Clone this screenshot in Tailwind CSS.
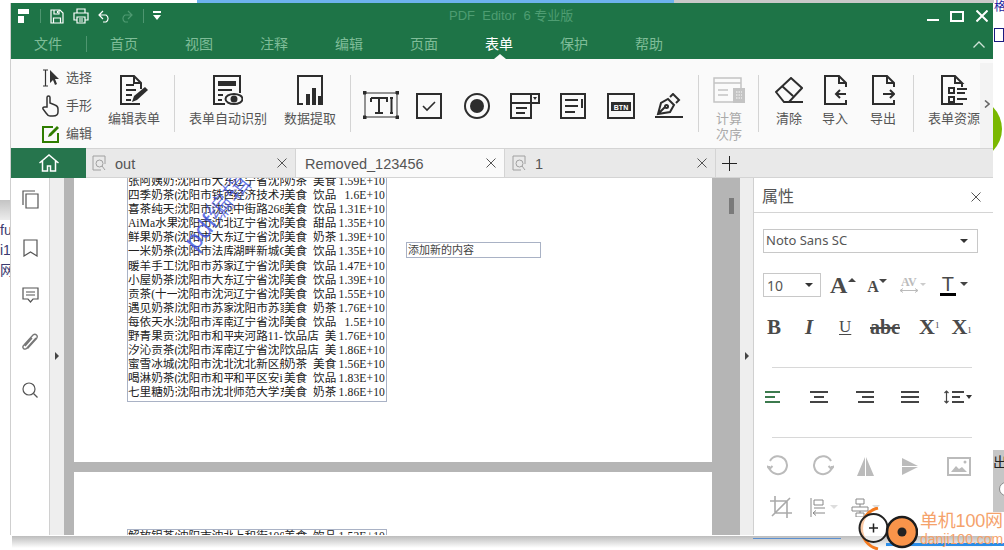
<!DOCTYPE html>
<html lang="zh">
<head>
<meta charset="utf-8">
<script src="https://cdn.jsdelivr.net/npm/@tailwindcss/browser@4"></script>
</head>
<body class="bg-white">
<div class="relative w-[1004px] h-[550px] overflow-hidden bg-white font-['Liberation_Sans','Noto_Sans_CJK_SC',sans-serif]">

  <!-- desktop behind the window -->
  <div class="absolute left-[197px] top-0 w-[477px] h-[3px] bg-[#6db3ee]"></div>
  <div class="absolute left-[674px] top-0 w-[320px] h-[3px] bg-[#c9c9c9]"></div>
  <div class="absolute left-[994px] top-0 text-[12px] leading-[14px] text-[#1a1aa0]">格</div>
  <div class="absolute left-[994px] top-[28px] w-[10px] h-[14px] border border-[#1a1a80] bg-white"></div>
  <div class="absolute left-[926px] top-[98px] w-[76px] h-[62px] rounded-full bg-[#7ab800]"></div>
  <div class="absolute left-0 top-[200px] w-[10px] h-[20px] bg-gradient-to-b from-[#c4c4c4] to-[#ececec]"></div>
  <div class="absolute left-0 top-[220px] w-[10px] overflow-hidden text-[14px] leading-[20px] text-[#3a3a70] whitespace-nowrap">
    <div>ful</div><div>i1</div><div>网</div>
  </div>
  <div class="absolute left-[993px] top-[450px] w-[11px] h-[62px] bg-[#c6c6c6] overflow-hidden text-[14px] leading-[24px] text-[#222] whitespace-nowrap">
    <div>出硅</div>
    <div class="ml-[6px] mt-[8px] w-[14px] h-[14px] rounded-full bg-white border border-[#888]"></div>
  </div>
  <div class="absolute left-[12px] top-[536px] w-[980px] h-[12px] bg-gradient-to-b from-[#bdbdbd] to-white"></div>
  <div class="absolute left-[753px] top-[538px] w-[88px] h-px bg-[#5b8fd0]"></div>
  <div class="absolute left-[886px] top-[543px] w-[118px] h-[3px] bg-[#2b8de8]"></div>

  <!-- application window -->
  <div class="absolute left-[10px] top-[3px] w-[983px] h-[532px] flex flex-col border-l border-[#cfcfcf] bg-white">

    <!-- title bar -->
    <div class="h-[30px] pb-[4px] flex items-center bg-[#1e7447] shrink-0">
      <svg class="ml-[7px] w-[12px] h-[14px]" viewBox="0 0 12 14" fill="#fff"><path d="M0 0h11v5H0zM0 7h6v7H0z"/></svg>
      <div class="ml-[10px] w-px h-[14px] bg-[#4e9670]"></div>
      <svg class="ml-[9px] w-[14px] h-[15px]" viewBox="0 0 14 15" fill="none" stroke="#fff" stroke-width="1.2"><path d="M1 1h9l3 3v10H1zM4 1v4h5V1M3.500 14V9h7v5M7.500 2v2"/></svg>
      <svg class="ml-[9px] w-[16px] h-[16px]" viewBox="0 0 16 16" fill="none" stroke="#fff" stroke-width="1.2"><path d="M4 5V1h8v4M4 12H1V5h14v7h-3M4 9h8v6H4zM6 11h4M6 13h4"/></svg>
      <svg class="ml-[9px] w-[13px] h-[13px]" viewBox="0 0 13 13" fill="none" stroke="#fff" stroke-width="1.2"><path d="M5 1 1 5l4 4M1 5h7a4 4 0 0 1 0 7H5"/></svg>
      <svg class="ml-[9px] w-[13px] h-[13px]" viewBox="0 0 13 13" fill="none" stroke="#4f9a72" stroke-width="1.2"><path d="m8 1 4 4-4 4M12 5H5a4 4 0 0 0 0 7h3"/></svg>
      <div class="ml-[10px] w-px h-[14px] bg-[#4e9670]"></div>
      <svg class="ml-[9px] w-[8px] h-[10px]" viewBox="0 0 8 10" fill="#fff"><path d="M0 0h8v2H0zM0 4h8L4 9z"/></svg>
      <div class="ml-[288px] text-[13px] leading-[20px] text-[#4e9d72] whitespace-pre">PDF  Editor  6 专业版</div>
      <div class="ml-auto flex items-center">
        <div class="w-[12px] h-[2px] bg-white mt-[8px]"></div>
        <div class="ml-[11px] w-[14px] h-[11px] border-2 border-white"></div>
        <svg class="ml-[12px] mr-[5px] w-[12px] h-[12px]" viewBox="0 0 12 12" stroke="#fff" stroke-width="2"><path d="m0.500 0.500 11 11M11.500 0.500l-11 11"/></svg>
      </div>
    </div>

    <!-- menu bar -->
    <div class="relative h-[26px] pb-[4px] flex items-center bg-[#1e7447] shrink-0 text-[14px] leading-[20px] text-[#7fbd98]">
      <span class="ml-[23px] w-[28px]">文件</span>
      <span class="ml-[24px] w-px h-[16px] bg-[#4e9670]"></span>
      <span class="ml-[23px] w-[28px]">首页</span>
      <span class="ml-[47px] w-[28px]">视图</span>
      <span class="ml-[47px] w-[28px]">注释</span>
      <span class="ml-[47px] w-[28px]">编辑</span>
      <span class="ml-[47px] w-[28px]">页面</span>
      <span class="ml-[47px] w-[28px] text-white">表单</span>
      <span class="ml-[47px] w-[28px]">保护</span>
      <span class="ml-[47px] w-[28px]">帮助</span>
      <svg class="ml-auto mr-[8px] w-[12px] h-[7px]" viewBox="0 0 12 7" fill="none" stroke="#cfe3d7" stroke-width="1.300"><path d="m0.500 6.500 5.500-5.500 5.500 5.500"/></svg>
      <div class="absolute left-[483px] bottom-0 w-0 h-0 border-x-[6px] border-x-transparent border-b-[5px] border-b-[#fafafa]"></div>
    </div>

    <!-- ribbon -->
    <div class="relative h-[89px] flex items-start bg-[#fafafa] shrink-0 text-[13px] leading-[16px] text-[#555] whitespace-nowrap">
      <!-- tools -->
      <div class="ml-[31px] w-[66px] pt-[5px] flex flex-col">
        <div class="h-[28px] flex items-center">
          <svg class="w-[18px] h-[18px]" viewBox="0 0 18 18" fill="none"><path d="M1 1h5M1 17h5M3.500 1v16" stroke="#333" stroke-width="1.200"/><path d="M8 1v13l3-3 2 5 2-1-2-5h4z" fill="#333"/></svg>
          <span class="ml-[6px]">选择</span>
        </div>
        <div class="h-[28px] flex items-center">
          <svg class="w-[18px] h-[22px]" viewBox="0 0 18 22" fill="none" stroke="#333" stroke-width="1.500"><path d="M5 12V2.500a1.500 1.500 0 0 1 3 0V8l5 2q3 1 3 4v3q0 4-5 4H8q-2 0-4-3l-3-4q-.5-2 1.500-2z"/></svg>
          <span class="ml-[6px]">手形</span>
        </div>
        <div class="h-[28px] flex items-center">
          <svg class="w-[18px] h-[18px]" viewBox="0 0 18 18" fill="none"><path d="M11 2H1v15h15V8" stroke="#2f7d00" stroke-width="2"/><path d="m6 12 1-3 8-8 2 2-8 8z" fill="#2f7d00"/></svg>
          <span class="ml-[6px]">编辑</span>
        </div>
      </div>
      <!-- edit form -->
      <div class="w-[52px] pt-[16px] flex flex-col items-center">
        <svg class="w-[28px] h-[30px]" viewBox="0 0 28 30" fill="none" stroke="#2d2d2d" stroke-width="2"><path d="M20 29H1V1h13l7 7v6M14 1v7h7M6 10h8M6 15h10M6 20h6M6 25h5"/><path d="m12 27 2-6 11-9 3 3-11 10z" fill="#2d2d2d" stroke="none"/></svg>
        <span class="mt-[6px]">编辑表单</span>
      </div>
      <div class="ml-[14px] mt-[16px] w-px h-[57px] bg-[#d4d4d4]"></div>
      <!-- recognition -->
      <div class="ml-[14px] w-[78px] pt-[16px] flex flex-col items-center">
        <svg class="w-[30px] h-[30px]" viewBox="0 0 30 30" fill="none" stroke="#2d2d2d" stroke-width="2"><path d="M12 29H1V1h26v17"/><path d="M5 6h18v5H5z" fill="#2d2d2d" stroke="none"/><path d="M5 15h14M5 20h5M5 25h4"/><ellipse cx="21" cy="24" rx="8.500" ry="5"/><circle cx="21" cy="24" r="2.500" fill="#2d2d2d"/></svg>
        <span class="mt-[6px]">表单自动识别</span>
      </div>
      <!-- extract -->
      <div class="ml-[17px] w-[52px] pt-[16px] flex flex-col items-center">
        <svg class="w-[26px] h-[30px]" viewBox="0 0 26 30" fill="none"><path d="M6 29H1V1h24v28h-1" stroke="#2d2d2d" stroke-width="2"/><path d="M9 19h4v11H9zM15 13h4v17h-4zM21 21h4v9h-4z" fill="#2d2d2d"/></svg>
        <span class="mt-[6px]">数据提取</span>
      </div>
      <div class="ml-[14px] mt-[16px] w-px h-[57px] bg-[#d4d4d4]"></div>
      <!-- form fields -->
      <svg class="ml-[12px] mt-[32px] w-[36px] h-[28px]" viewBox="0 0 36 28" fill="none" stroke="#2d2d2d" stroke-width="1"><path d="M2 2h32M2 26h32M2 2v24M34 2v24"/><path d="M0 0h3v3H0zM33 0h3v3h-3zM0 25h3v3H0zM33 25h3v3h-3z" fill="#2d2d2d"/><path d="M8 7h16v4M8 11V7M16 7v15M12 22h8M27 7h3M28.500 7v15M27 22h3" stroke-width="2"/></svg>
      <svg class="ml-[17px] mt-[34px] w-[26px] h-[26px]" viewBox="0 0 26 26" fill="none" stroke="#2d2d2d" stroke-width="2"><path d="M1 1h24v24H1z"/><path d="m7 13 4 4 8-8" stroke-width="1.600"/></svg>
      <svg class="ml-[22px] mt-[34px] w-[26px] h-[26px]" viewBox="0 0 26 26" fill="none"><circle cx="13" cy="13" r="12" stroke="#2d2d2d" stroke-width="2"/><circle cx="13" cy="13" r="7" fill="#2d2d2d"/></svg>
      <svg class="ml-[20px] mt-[34px] w-[30px] h-[26px]" viewBox="0 0 30 26" fill="none" stroke="#2d2d2d" stroke-width="2"><path d="M21 1H1v24h20V10M21 10H1M21 1h8v9h-8z"/><path d="M6 15h11M6 20h9"/><path d="M23 4h4l-2 3z" fill="#2d2d2d" stroke="none"/></svg>
      <svg class="ml-[20px] mt-[34px] w-[26px] h-[26px]" viewBox="0 0 26 26" fill="none" stroke="#2d2d2d" stroke-width="2"><path d="M1 1h24v24H1zM5 7h13M5 13h13M5 19h10M22 6v9"/></svg>
      <svg class="ml-[21px] mt-[34px] w-[28px] h-[26px]" viewBox="0 0 28 26" fill="none"><path d="M1 1h26v24H1z" stroke="#2d2d2d" stroke-width="2"/><path d="M4 9h20v9H4z" fill="#2d2d2d"/><text x="14" y="16.500" font-size="7" font-weight="700" fill="#fff" text-anchor="middle" font-family="Liberation Sans">BTN</text></svg>
      <svg class="ml-[20px] mt-[34px] w-[28px] h-[25px]" viewBox="0 0 28 25" fill="none" stroke="#2d2d2d" stroke-width="2"><path d="M0 24h28" /><path d="m3 21 3-11 7-4 6 6-4 7zM3 21l7-7M15 4l3-3 6 6-3 3"/><circle cx="11.500" cy="13.500" r="1.500"/></svg>
      <div class="ml-[15px] mt-[16px] w-px h-[57px] bg-[#d4d4d4]"></div>
      <!-- calc order -->
      <div class="ml-[14px] w-[32px] pt-[18px] flex flex-col items-center text-[#aaa]">
        <svg class="w-[32px] h-[26px]" viewBox="0 0 32 26" fill="none" stroke="#c4c4c4" stroke-width="1.500"><path d="M1 1h27v5H1zM1 6v19h20M28 6v5M5 13h10M5 18h10"/><path d="M20 11h12v15H20z" fill="#c4c4c4" stroke="none"/><path d="M23 15h6M23 18h6M23 21h6" stroke="#fafafa" stroke-width="1" stroke-dasharray="1.500 1"/></svg>
        <span class="mt-[8px]">计算</span>
        <span>次序</span>
      </div>
      <div class="ml-[13px] mt-[16px] w-px h-[57px] bg-[#d4d4d4]"></div>
      <!-- clear / import / export -->
      <div class="ml-[16px] w-[28px] pt-[18px] flex flex-col items-center">
        <svg class="w-[28px] h-[26px]" viewBox="0 0 28 26" fill="none" stroke="#2d2d2d" stroke-width="2"><path d="m1 15 15-14 11 10-13 14H9zM7 9l11 10M10 25h18"/></svg>
        <span class="mt-[8px]">清除</span>
      </div>
      <div class="ml-[19px] w-[26px] pt-[16px] flex flex-col items-center">
        <svg class="w-[23px] h-[30px]" viewBox="0 0 23 30" fill="none" stroke="#2d2d2d" stroke-width="2"><path d="M22 12V8l-7-7H1v28h21v-4M15 1v7h7"/><path d="M22 19H12M16 15l-4 4 4 4"/></svg>
        <span class="mt-[6px]">导入</span>
      </div>
      <div class="ml-[22px] w-[26px] pt-[16px] flex flex-col items-center">
        <svg class="w-[23px] h-[30px]" viewBox="0 0 23 30" fill="none" stroke="#2d2d2d" stroke-width="2"><path d="M22 12V8l-7-7H1v28h21v-4M15 1v7h7"/><path d="M11 19h11M18 15l4 4-4 4"/></svg>
        <span class="mt-[6px]">导出</span>
      </div>
      <div class="ml-[17px] mt-[16px] w-px h-[57px] bg-[#d4d4d4]"></div>
      <div class="ml-[14px] w-[52px] pt-[16px] flex flex-col items-center">
        <svg class="w-[27px] h-[30px]" viewBox="0 0 27 30" fill="none" stroke="#2d2d2d" stroke-width="2"><path d="M21 8v4M22 29H1V1h13l7 7h-7V1"/><path d="M8 13h5v5H8zM8 22h5v5H8zM16 14h10M16 18h8M16 24h10"/></svg>
        <span class="mt-[6px]">表单资源</span>
      </div>
      <div class="absolute right-0 top-[4px] bottom-0 w-[13px] bg-[#f3f3f3] flex items-center justify-center">
        <svg class="w-[6px] h-[8px] mt-[-4px]" viewBox="0 0 6 8" fill="none" stroke="#666" stroke-width="1.600"><path d="m1 0.500 4 3.500-4 3.500"/></svg>
      </div>
    </div>

    <!-- tab bar -->
    <div class="h-[30px] flex items-stretch bg-[#e9e9e9] border-y border-[#d4d4d4] shrink-0 text-[14.5px] leading-[20px] text-[#555]">
      <div class="w-[75px] -my-px bg-[#26754d] flex items-center justify-center">
        <svg class="w-[20px] h-[18px]" viewBox="0 0 20 18" fill="none" stroke="#fff" stroke-width="1.500"><path d="M0.500 9 10 1l9.500 8M3.500 7v10h5v-5h3v5h5V7"/></svg>
      </div>
      <div class="w-[210px] flex items-center border-r border-[#d4d4d4]">
        <svg class="ml-[6px] w-[14px] h-[16px]" viewBox="0 0 14 16" fill="none" stroke="#a0a0a0" stroke-width="1"><path d="M9 15H1V1h12v8"/><circle cx="7.500" cy="8.500" r="3.500"/><path d="m10 11 3 4"/></svg>
        <span class="ml-[9px] mt-[1px]">out</span>
        <svg class="ml-auto mr-[8px] w-[10px] h-[10px]" viewBox="0 0 10 10" stroke="#555"><path d="m0.500 0.500 9 9M9.500 0.500l-9 9"/></svg>
      </div>
      <div class="w-[209px] flex items-center bg-[#fafafa] border-r border-[#d4d4d4]">
        <span class="ml-[9px] mt-[1px]">Removed_123456</span>
        <svg class="ml-auto mr-[8px] w-[10px] h-[10px]" viewBox="0 0 10 10" stroke="#555"><path d="m0.500 0.500 9 9M9.500 0.500l-9 9"/></svg>
      </div>
      <div class="w-[211px] flex items-center border-r border-[#d4d4d4]">
        <svg class="ml-[7px] w-[14px] h-[16px]" viewBox="0 0 14 16" fill="none" stroke="#a0a0a0" stroke-width="1"><path d="M9 15H1V1h12v8"/><circle cx="7.500" cy="8.500" r="3.500"/><path d="m10 11 3 4"/></svg>
        <span class="ml-[9px] mt-[1px]">1</span>
        <svg class="ml-auto mr-[8px] w-[10px] h-[10px]" viewBox="0 0 10 10" stroke="#555"><path d="m0.500 0.500 9 9M9.500 0.500l-9 9"/></svg>
      </div>
      <div class="flex items-center">
        <svg class="ml-[6px] w-[15px] h-[15px]" viewBox="0 0 15 15" stroke="#222"><path d="M7.500 0v15M0 7.500h15"/></svg>
      </div>
    </div>

    <!-- body -->
    <div class="flex-1 min-h-0 flex overflow-hidden">
      <!-- left rail -->
      <div class="w-[39px] shrink-0 flex flex-col items-center pt-[12px] gap-[30px] border-r border-[#d0d0d0] bg-white">
        <svg class="w-[17px] h-[19px]" viewBox="0 0 17 19" fill="none" stroke="#555" stroke-width="1.200"><path d="M1 15V1h12M4 4h12v14H4z"/></svg>
        <svg class="w-[15px] h-[18px]" viewBox="0 0 15 18" fill="none" stroke="#555" stroke-width="1.200"><path d="M1 1h13v16l-6.500-4L1 17z"/></svg>
        <svg class="w-[17px] h-[16px]" viewBox="0 0 17 16" fill="none" stroke="#555" stroke-width="1.200"><path d="M1 1h15v11h-5l-2.500 3L6 12H1zM4 5h9M4 8h9"/></svg>
        <svg class="w-[18px] h-[19px]" viewBox="0 0 18 19" fill="none" stroke="#777" stroke-width="1.400"><path d="m15 5-9 10q-2 2-3.500.5T3 12l9-10q2-1.500 3.500 0t0 3.500l-9 10M11 5l-7 8"/></svg>
        <svg class="w-[16px] h-[16px]" viewBox="0 0 16 16" fill="none" stroke="#555" stroke-width="1.200"><circle cx="7" cy="7" r="6"/><path d="m11.500 11.500 4 4"/></svg>
      </div>
      <!-- left gutter -->
      <div class="w-[14px] shrink-0 bg-[#eeeeee] flex items-center justify-center">
        <div class="mt-[-2px] w-0 h-0 border-y-[4px] border-y-transparent border-l-[4px] border-l-[#444]"></div>
      </div>
      <!-- document viewport -->
      <div class="relative w-[676px] shrink-0 bg-[#b5b5b5] pl-[10px] overflow-hidden">
        <!-- page 1 -->
        <div class="relative w-[638px] h-[284px] bg-white overflow-hidden font-['Liberation_Serif','Noto_Sans_CJK_SC',serif] text-[11.6px] leading-[14.1px] text-[#222] [word-spacing:3px]">
          <div class="absolute left-[53px] top-[-4px] w-[260px] border border-[#a9b2c5] bg-white whitespace-nowrap">
            <div class="flex h-[14.1px]"><span class="w-[49px] overflow-hidden">张阿姨奶茶</span><span class="w-[56px] overflow-hidden">沈阳市大东</span><span class="w-[51px] overflow-hidden">辽宁省沈阳</span><span class="w-[52px]">奶茶 美食</span><span class="flex-1 text-right pr-px tracking-[0.12px]">1.59E+10</span></div>
            <div class="flex h-[14.1px]"><span class="w-[49px] overflow-hidden">四季奶茶(沈阳</span><span class="w-[56px] overflow-hidden">沈阳市铁西</span><span class="w-[51px] overflow-hidden">经济技术开</span><span class="w-[52px]">美食 饮品</span><span class="flex-1 text-right pr-px tracking-[0.12px]">1.6E+10</span></div>
            <div class="flex h-[14.1px]"><span class="w-[49px] overflow-hidden">喜茶纯天然</span><span class="w-[56px] overflow-hidden">沈阳市沈河</span><span class="w-[51px] overflow-hidden">中街路268</span><span class="w-[52px]">美食 饮品</span><span class="flex-1 text-right pr-px tracking-[0.12px]">1.31E+10</span></div>
            <div class="flex h-[14.1px]"><span class="w-[49px] overflow-hidden">AiMa水果捞</span><span class="w-[56px] overflow-hidden">沈阳市沈北</span><span class="w-[51px] overflow-hidden">辽宁省沈阳</span><span class="w-[52px]">美食 甜品</span><span class="flex-1 text-right pr-px tracking-[0.12px]">1.35E+10</span></div>
            <div class="flex h-[14.1px]"><span class="w-[49px] overflow-hidden">鲜果奶茶(</span><span class="w-[56px] overflow-hidden">沈阳市大东</span><span class="w-[51px] overflow-hidden">辽宁省沈阳</span><span class="w-[52px]">美食 奶茶</span><span class="flex-1 text-right pr-px tracking-[0.12px]">1.39E+10</span></div>
            <div class="flex h-[14.1px]"><span class="w-[49px] overflow-hidden">一米奶茶(</span><span class="w-[56px] overflow-hidden">沈阳市法库</span><span class="w-[51px] overflow-hidden">湖畔新城C</span><span class="w-[52px]">美食 饮品</span><span class="flex-1 text-right pr-px tracking-[0.12px]">1.35E+10</span></div>
            <div class="flex h-[14.1px]"><span class="w-[49px] overflow-hidden">暖羊手工奶</span><span class="w-[56px] overflow-hidden">沈阳市苏家</span><span class="w-[51px] overflow-hidden">辽宁省沈阳</span><span class="w-[52px]">美食 饮品</span><span class="flex-1 text-right pr-px tracking-[0.12px]">1.47E+10</span></div>
            <div class="flex h-[14.1px]"><span class="w-[49px] overflow-hidden">小屋奶茶店</span><span class="w-[56px] overflow-hidden">沈阳市大东</span><span class="w-[51px] overflow-hidden">辽宁省沈阳</span><span class="w-[52px]">美食 饮品</span><span class="flex-1 text-right pr-px tracking-[0.12px]">1.39E+10</span></div>
            <div class="flex h-[14.1px]"><span class="w-[49px] overflow-hidden">贡茶(十一</span><span class="w-[56px] overflow-hidden">沈阳市沈河</span><span class="w-[51px] overflow-hidden">辽宁省沈阳</span><span class="w-[52px]">美食 饮品</span><span class="flex-1 text-right pr-px tracking-[0.12px]">1.55E+10</span></div>
            <div class="flex h-[14.1px]"><span class="w-[49px] overflow-hidden">遇见奶茶店</span><span class="w-[56px] overflow-hidden">沈阳市苏家</span><span class="w-[51px] overflow-hidden">沈阳市苏家</span><span class="w-[52px]">美食 奶茶</span><span class="flex-1 text-right pr-px tracking-[0.12px]">1.76E+10</span></div>
            <div class="flex h-[14.1px]"><span class="w-[49px] overflow-hidden">每依天水果</span><span class="w-[56px] overflow-hidden">沈阳市浑南</span><span class="w-[51px] overflow-hidden">辽宁省沈阳</span><span class="w-[52px]">美食 饮品</span><span class="flex-1 text-right pr-px tracking-[0.12px]">1.5E+10</span></div>
            <div class="flex h-[14.1px]"><span class="w-[49px] overflow-hidden">野青果贡茶</span><span class="w-[56px] overflow-hidden">沈阳市和平</span><span class="w-[51px] overflow-hidden">夹河路11-</span><span class="w-[52px]">饮品店 美</span><span class="flex-1 text-right pr-px tracking-[0.12px]">1.76E+10</span></div>
            <div class="flex h-[14.1px]"><span class="w-[49px] overflow-hidden">汐沁贡茶(</span><span class="w-[56px] overflow-hidden">沈阳市浑南</span><span class="w-[51px] overflow-hidden">辽宁省沈阳</span><span class="w-[52px]">饮品店 美</span><span class="flex-1 text-right pr-px tracking-[0.12px]">1.86E+10</span></div>
            <div class="flex h-[14.1px]"><span class="w-[49px] overflow-hidden">蜜雪冰城(</span><span class="w-[56px] overflow-hidden">沈阳市沈北</span><span class="w-[51px] overflow-hidden">沈北新区航</span><span class="w-[52px]">奶茶 美食</span><span class="flex-1 text-right pr-px tracking-[0.12px]">1.56E+10</span></div>
            <div class="flex h-[14.1px]"><span class="w-[49px] overflow-hidden">喝淋奶茶(</span><span class="w-[56px] overflow-hidden">沈阳市和平</span><span class="w-[51px] overflow-hidden">和平区安i</span><span class="w-[52px]">美食 饮品</span><span class="flex-1 text-right pr-px tracking-[0.12px]">1.83E+10</span></div>
            <div class="flex h-[14.1px]"><span class="w-[49px] overflow-hidden">七里糖奶茶</span><span class="w-[56px] overflow-hidden">沈阳市沈北</span><span class="w-[51px] overflow-hidden">师范大学东</span><span class="w-[52px]">美食 奶茶</span><span class="flex-1 text-right pr-px tracking-[0.12px]">1.86E+10</span></div>
          </div>
          <!-- watermark -->
          <div class="absolute left-[99px] top-[20px] -rotate-[50deg] font-['Liberation_Sans','Noto_Sans_CJK_SC',sans-serif] text-[26px] leading-[28px] font-light text-[#3b50e0]/80 whitespace-nowrap">pdf编辑</div>
          <!-- added text box -->
          <div class="absolute left-[332px] top-[64px] w-[135px] h-[16px] border border-[#a9b2c5] text-[11px] leading-[14px] text-[#444] pl-px font-['Liberation_Sans','Noto_Sans_CJK_SC',sans-serif]">添加新的内容</div>
        </div>
        <!-- page 2 -->
        <div class="relative w-[638px] h-[80px] mt-[10px] bg-white overflow-hidden font-['Liberation_Serif','Noto_Sans_CJK_SC',serif] text-[11.6px] leading-[14.1px] text-[#222] [word-spacing:3px]">
          <div class="absolute left-[53px] top-[57px] w-[260px] border border-[#a9b2c5] whitespace-nowrap">
            <div class="flex h-[14.1px]"><span class="w-[49px] overflow-hidden">解放银茶(</span><span class="w-[56px] overflow-hidden">沈阳市沈北</span><span class="w-[51px] overflow-hidden">上和街100</span><span class="w-[52px]">美食 饮品</span><span class="flex-1 text-right pr-px tracking-[0.12px]">1.52E+10</span></div>
          </div>
        </div>
        <!-- scrollbar -->
        <div class="absolute right-[6px] top-[20px] w-[5px] h-[16px] bg-[#7a7a7a]"></div>
      </div>
      <!-- right gutter -->
      <div class="w-[14px] shrink-0 bg-[#eeeeee] border-r border-[#d0d0d0] flex items-center justify-center">
        <div class="mt-[-2px] w-0 h-0 border-y-[4px] border-y-transparent border-l-[4px] border-l-[#444]"></div>
      </div>

      <!-- properties panel -->
      <div class="flex-1 min-w-0 bg-white text-[#4a4a4a]">
        <div class="h-[35px] pt-[3px] flex items-center justify-between border-b border-[#d4d4d4] pl-[8px] pr-[12px]">
          <span class="text-[16px] leading-[22px] text-[#555]">属性</span>
          <svg class="w-[10px] h-[10px]" viewBox="0 0 10 10" stroke="#555"><path d="m0.500 0.500 9 9M9.500 0.500l-9 9"/></svg>
        </div>
        <div class="pl-[9px] pr-[15px]">
          <div class="mt-[16px] h-[24px] w-[215px] border border-[#c8c8c8] flex items-center justify-between pl-[2px] pr-[3px] text-[13px] font-['Noto_Sans'] text-[#555]">
            <span>Noto Sans SC</span>
            <div class="mr-[6px] w-0 h-0 border-x-[4px] border-x-transparent border-t-[4px] border-t-[#333]"></div>
          </div>
          <!-- size row -->
          <div class="mt-[20px] h-[24px] flex items-center font-['Liberation_Serif',serif]">
            <div class="h-[24px] w-[58px] border border-[#c8c8c8] flex items-center justify-between pl-[3px] pr-[7px] text-[14px] font-['Noto_Sans'] text-[#555]">
              <span>10</span>
              <div class="w-0 h-0 border-x-[4px] border-x-transparent border-t-[4px] border-t-[#333]"></div>
            </div>
            <span class="ml-[9px] text-[24px] leading-[24px] font-bold">A</span>
            <div class="ml-px mb-[10px] w-0 h-0 border-x-[4px] border-x-transparent border-b-[4px] border-b-[#444]"></div>
            <span class="ml-[11px] mt-[3px] text-[16px] leading-[20px] font-bold">A</span>
            <div class="mb-[8px] w-0 h-0 border-x-[4px] border-x-transparent border-t-[4px] border-t-[#444]"></div>
            <div class="ml-[13px] w-[18px] flex flex-col items-center text-[#bbb] font-bold text-[12px] leading-[11px]">
              <span>AV</span>
              <svg class="w-[18px] h-[5px]" viewBox="0 0 18 5" fill="none" stroke="#bbb"><path d="M0 2.500h18M3 .5l-3 2 3 2M15 .5l3 2-3 2"/></svg>
            </div>
            <div class="ml-[2px] mb-[2px] w-0 h-0 border-x-[3px] border-x-transparent border-t-[3px] border-t-[#ccc]"></div>
            <div class="ml-[14px] w-[16px] flex flex-col items-center">
              <span class="font-['Liberation_Sans'] text-[20px] leading-[18px] font-light">T</span>
              <div class="w-[16px] h-[3px] bg-black"></div>
            </div>
            <div class="ml-[4px] mb-[2px] w-0 h-0 border-x-[4px] border-x-transparent border-t-[4px] border-t-[#444]"></div>
          </div>
          <!-- style row -->
          <div class="mt-[19px] h-[22px] flex items-center font-['Liberation_Serif',serif] leading-[22px] font-bold">
            <span class="ml-[4px] w-[14px] text-[21px]">B</span>
            <span class="ml-[24px] w-[12px] text-[21px] italic">I</span>
            <span class="ml-[22px] w-[14px] text-[17px] font-normal underline underline-offset-2">U</span>
            <span class="ml-[17px] w-[36px] text-[20px] line-through">abc</span>
            <span class="ml-[13px] text-[22px]">X</span><span class="mb-[5px] text-[9px] leading-[10px] font-normal">1</span>
            <span class="ml-[12px] text-[22px]">X</span><span class="mt-[6px] text-[9px] leading-[10px] font-normal">1</span>
          </div>
          <div class="mt-[29px] ml-[9px] w-[200px] h-px bg-[#d8d8d8]"></div>
          <!-- align row -->
          <div class="mt-[22px] h-[14px] flex items-center">
            <svg class="ml-[2px] w-[16px] h-[12px]" viewBox="0 0 16 12" fill="none" stroke="#3c7a4e" stroke-width="2"><path d="M0 1h15M0 6h10M0 11h15"/></svg>
            <svg class="ml-[29px] w-[18px] h-[12px]" viewBox="0 0 18 12" fill="none" stroke="#444" stroke-width="2"><path d="M0 1h18M4 6h10M0 11h18"/></svg>
            <svg class="ml-[28px] w-[18px] h-[12px]" viewBox="0 0 18 12" fill="none" stroke="#444" stroke-width="2"><path d="M0 1h18M6 6h12M2 11h16"/></svg>
            <svg class="ml-[27px] w-[18px] h-[12px]" viewBox="0 0 18 12" fill="none" stroke="#444" stroke-width="2"><path d="M0 1h18M0 6h18M0 11h18"/></svg>
            <svg class="ml-[25px] w-[21px] h-[14px]" viewBox="0 0 21 14" fill="none" stroke="#444"><path d="M2.500 1v12M0.500 3l2-2 2 2M0.500 11l2 2 2-2" stroke-width="1.200"/><path d="M8 2h12M8 7h8M8 12h12" stroke-width="2"/></svg>
            <div class="ml-[1px] w-0 h-0 border-x-[3.500px] border-x-transparent border-t-[4px] border-t-[#333]"></div>
          </div>
          <div class="mt-[33px] ml-[9px] w-[200px] h-px bg-[#d8d8d8]"></div>
          <!-- image row -->
          <div class="mt-[17px] h-[22px] flex items-center">
            <svg class="ml-[4px] w-[22px] h-[22px]" viewBox="0 0 22 22" fill="none" stroke="#bbb" stroke-width="2"><path d="M3 6a9 9 0 1 1-1 5M0 11l2.500 3 3-3"/></svg>
            <svg class="ml-[23px] w-[22px] h-[22px]" viewBox="0 0 22 22" fill="none" stroke="#bbb" stroke-width="2"><path d="M19 6a9 9 0 1 0 1 5M22 11l-2.500 3-3-3"/></svg>
            <svg class="ml-[23px] w-[17px] h-[19px]" viewBox="0 0 17 19" fill="#bbb"><path d="M8 0v19H0zM9 0l8 19H9z"/></svg>
            <svg class="ml-[28px] w-[16px] h-[17px]" viewBox="0 0 16 17" fill="#bbb"><path d="M0 0l16 8H0zM0 9h16L0 17z"/></svg>
            <svg class="ml-[29px] w-[24px] h-[19px]" viewBox="0 0 24 19" fill="none"><path d="M1 1h22v17H1z" stroke="#bbb" stroke-width="2"/><path d="m4 15 5-6 3 3 3-2 5 5z" fill="#bbb"/><circle cx="18" cy="5" r="1.500" fill="#bbb"/></svg>
          </div>
          <!-- layout row -->
          <div class="mt-[19px] h-[22px] flex items-center">
            <svg class="ml-[7px] w-[22px] h-[22px]" viewBox="0 0 22 22" fill="none" stroke="#aaa" stroke-width="1.600"><path d="M5 0v17h17M0 5h17v17M20 2 2 20"/></svg>
            <svg class="ml-[18px] w-[16px] h-[19px]" viewBox="0 0 16 19" fill="none" stroke="#888"><path d="M1 0v19M4 2h9v5H4zM4 10h11M3 15h12M6 12.500 3 15l3 2.500"/></svg>
            <div class="ml-[4px] w-0 h-0 border-x-[4px] border-x-transparent border-t-[4px] border-t-[#ddd]"></div>
            <svg class="ml-[13px] w-[18px] h-[19px]" viewBox="0 0 18 19" fill="none" stroke="#888"><path d="M5 1h8v5H5zM1 9h16v4H1zM5 15h8v4H5zM9 6v3M9 13v2"/></svg>
            <div class="ml-[3px] w-0 h-0 border-x-[4px] border-x-transparent border-t-[4px] border-t-[#ddd]"></div>
          </div>
        </div>
      </div>
    </div>
  </div>

  <!-- watermark logo over everything -->
  <div class="absolute left-[856px] top-[507px] w-[148px] h-[43px]">
    <svg class="absolute left-0 top-0 w-[62px] h-[43px]" viewBox="0 0 62 43" fill="none">
      <path d="M22 1A21 21 0 0 0 22 42" stroke="#f47a1f" stroke-width="3"/>
      <circle cx="17.500" cy="21" r="14" fill="#fff" fill-opacity=".6" stroke="#222" stroke-width="2"/>
      <path d="M13 21h9M17.500 16.500v9" stroke="#222" stroke-width="1.500"/>
      <circle cx="46" cy="25" r="15" fill="#f9944a" stroke="#1c1c1c" stroke-width="2.500"/>
      <circle cx="46" cy="25" r="4.500" fill="#222"/>
    </svg>
    <div class="absolute left-[64px] top-[3px] text-[18px] leading-[22px] tracking-[-0.2px] text-[#f5a26b] whitespace-nowrap">单机100网</div>
    <div class="absolute left-[64px] top-[24px] text-[14px] leading-[17px] text-[#f5a26b] whitespace-nowrap">danji100.com</div>
  </div>
</div>
</body>
</html>
